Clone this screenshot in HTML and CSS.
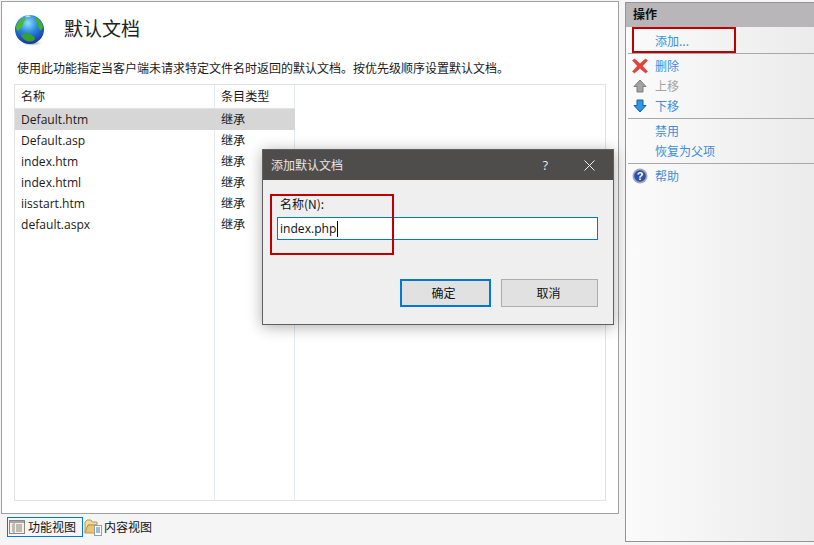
FILE: index.html
```html
<!DOCTYPE html>
<html lang="zh-CN">
<head>
<meta charset="utf-8">
<title>默认文档</title>
<link rel="stylesheet" href="styles.css">
</head>
<body>
<div class="app">
  <div class="left">
    <main class="main">
      <header class="head">
        <svg class="globe" width="34" height="33" viewBox="0 0 34 33">
          <defs>
            <radialGradient id="sea" cx="0.45" cy="0.28" r="0.78">
              <stop offset="0" stop-color="#8fe0fa"/><stop offset="0.42" stop-color="#2a8ade"/><stop offset="1" stop-color="#10289a"/>
            </radialGradient>
            <radialGradient id="sh" cx="0.5" cy="0.5" r="0.5">
              <stop offset="0" stop-color="#666"/><stop offset="1" stop-color="#fff" stop-opacity="0"/>
            </radialGradient>
          </defs>
          <ellipse cx="18" cy="28" rx="12" ry="3.500" fill="url(#sh)"/>
          <circle cx="15.500" cy="14.500" r="14.500" fill="url(#sea)"/>
          <path d="M7 20c4-2 9-2 12 1 3 2 2 4 0 5-4 1-8 0-10-3-1-1-2-2-2-3z" fill="#3a9f2a"/>
          <path d="M2 12C3 8 6 4 10 3c2 0 2 2 0 3-1 2 0 3-2 5-1 2-3 4-4 5-1-1-2-2-2-4z" fill="#4cb82f"/>
          <path d="M21 2c4 2 7 5 8 10-1 2-2 4-3 3-1-2-2-3-2-5 0-3-4-5-3-8z" fill="#45ad2d"/>
          <path d="M11 1c2-1 4-1 6 0-1 1-4 2-6 0z" fill="#c9e7b0"/>
        </svg>
        <h1 class="title">默认文档</h1>
      </header>
      <p class="desc">使用此功能指定当客户端未请求特定文件名时返回的默认文档。按优先级顺序设置默认文档。</p>
      <section class="list">
        <div class="cols">
          <div class="col col-name">
            <div class="cell head-cell">名称</div>
            <div class="cell sel">Default.htm</div>
            <div class="cell">Default.asp</div>
            <div class="cell">index.htm</div>
            <div class="cell">index.html</div>
            <div class="cell">iisstart.htm</div>
            <div class="cell">default.aspx</div>
          </div>
          <div class="col col-type">
            <div class="cell head-cell">条目类型</div>
            <div class="cell sel">继承</div>
            <div class="cell">继承</div>
            <div class="cell">继承</div>
            <div class="cell">继承</div>
            <div class="cell">继承</div>
            <div class="cell">继承</div>
          </div>
        </div>
      </section>
    </main>
    <nav class="tabs">
      <div class="tab tab-on">
        <svg width="16" height="16" viewBox="0 0 16 16">
          <rect x="0.500" y="1.500" width="15" height="13" fill="#f4f1e6" stroke="#8a8a82"/>
          <rect x="1" y="2" width="14" height="2" fill="#a9a9a0"/>
          <path d="M5 4v10M3 6h1M3 8h1M3 10h1M3 12h1M7 6h6M7 8h6M7 10h6M7 12h6" stroke="#8a8a82" fill="none"/>
        </svg>
        <span>功能视图</span>
      </div>
      <div class="tab">
        <svg width="18" height="18" viewBox="0 0 18 18">
          <path d="M1 15V4l2-2h4l1 2h5v3H4z" fill="#f3dd9d" stroke="#b89a55"/>
          <path d="M1 15l3-8h9v8z" fill="#e8c56e" stroke="#b89a55"/>
          <rect x="10.500" y="7.500" width="7" height="10" fill="#fff" stroke="#8e9fb5"/>
          <path d="M12 10h4M12 12h4M12 14h4" stroke="#3f73b5"/>
        </svg>
        <span>内容视图</span>
      </div>
    </nav>
  </div>
  <aside class="side">
    <div class="side-title">操作</div>
    <div class="act act-first"><span class="act-ico"></span><a>添加...</a></div>
    <div class="group">
      <div class="act">
        <svg class="act-ico" width="16" height="16" viewBox="0 0 16 16"><path d="M0.500 2.500l2-1.500L8 5.700 13.500 1l2 1.500L10.500 8l5 5.500-2 1.500L8 10.300 2.500 15l-2-1.500L5.500 8z" fill="#e2423a" stroke="#c4342b" stroke-width="0.500"/></svg>
        <a>删除</a>
      </div>
      <div class="act">
        <svg class="act-ico" width="16" height="16" viewBox="0 0 16 16"><path d="M8 2l6 6.500h-3V14H5V8.500H2z" fill="#a3a3a3" stroke="#7d7d7d"/></svg>
        <a class="off">上移</a>
      </div>
      <div class="act">
        <svg class="act-ico" width="16" height="16" viewBox="0 0 16 16"><path d="M5 2h6v5.500h3L8 14 2 7.500h3z" fill="#2f95e6" stroke="#1560ad"/></svg>
        <a>下移</a>
      </div>
    </div>
    <div class="group">
      <div class="act"><span class="act-ico"></span><a>禁用</a></div>
      <div class="act"><span class="act-ico"></span><a>恢复为父项</a></div>
    </div>
    <div class="group">
      <div class="act">
        <svg class="act-ico" width="16" height="16" viewBox="0 0 16 16">
          <circle cx="8" cy="8" r="7.500" fill="#9fa6b4"/><circle cx="8" cy="8" r="5.800" fill="#2a4fb0"/>
          <text x="8" y="12" text-anchor="middle" class="q">?</text>
        </svg>
        <a>帮助</a>
      </div>
    </div>
  </aside>
</div>

<div class="mark mark-add"></div>

<div class="dialog">
  <div class="dlg-bar">
    <span class="dlg-title">添加默认文档</span>
    <span class="dlg-help">?</span>
    <svg class="dlg-close" width="11" height="11" viewBox="0 0 11 11"><path d="M0.500 0.500l10 10M10.500 0.500l-10 10" stroke="#f0f0f0" fill="none"/></svg>
  </div>
  <div class="dlg-body">
    <label class="dlg-label">名称(N):</label>
    <div class="dlg-input">index.php<span class="caret"></span></div>
    <div class="dlg-btns">
      <div class="btn btn-ok">确定</div>
      <div class="btn btn-no">取消</div>
    </div>
  </div>
</div>
<div class="mark mark-name"></div>
</body>
</html>
```

FILE: styles.css
```css
* { box-sizing: border-box; }
html, body { margin: 0; height: 100%; }
body {
  width: 814px;
  height: 545px;
  overflow: hidden;
  position: relative;
  background: #f5f5f5;
  font-family: "Open Sans", "Noto Sans CJK SC", sans-serif;
  font-size: 12px;
  color: #1a1a1a;
}
.app { display: flex; height: 545px; }
.left { flex: none; width: 619px; padding-left: 1px; display: flex; flex-direction: column; }
.main {
  height: 513px;
  margin-top: 1px;
  background: #fff;
  border: 1px solid #a0a0a0;
  padding: 0 12px;
  display: flex;
  flex-direction: column;
}
.head { display: flex; align-items: flex-start; height: 47px; padding-top: 13px; }
.globe { flex: none; margin-right: 16px; }
.title {
  margin: 1px 0 0;
  font: 400 19px/24px "Noto Sans CJK SC", sans-serif;
  color: #222;
}
.desc {
  margin: 9px 0 0 3px;
  height: 26px;
  font: 400 12px/20px "Noto Sans CJK SC", sans-serif;
  white-space: nowrap;
}
.list {
  height: 417px;
  border: 1px solid #e3e3e3;
  background: #fff;
}
.cols { display: flex; height: 100%; }
.col { border-right: 1px solid #e3e9f2; }
.col-name { width: 200px; }
.col-type { width: 80px; }
.cell {
  height: 21px;
  padding-left: 6px;
  font-size: 12.100px;
  line-height: 21px;
  white-space: nowrap;
}
.head-cell {
  height: 24px;
  line-height: 24px;
  border-bottom: 1px solid #e3e3e3;
  margin-right: -1px;
}
.sel { background: #d6d6d6; margin-right: -1px; }
.tabs { display: flex; align-items: flex-start; gap: 1px; padding: 3px 0 0 6px; }
.tab {
  flex: none;
  display: flex;
  align-items: center;
  gap: 2px;
  height: 20px;
  white-space: nowrap;
  font: 400 12px/18px "Noto Sans CJK SC", sans-serif;
  color: #111;
}
.tab-on { border: 1px solid #0078d7; padding: 0 6px 0 1px; width: 76px; gap: 3px; }
.side {
  flex: none;
  width: 189px;
  margin: 2px 0 3px 6px;
  border-left: 1px solid #949494;
  border-top: 1px solid #949494;
  border-bottom: 1px solid #949494;
  background: linear-gradient(90deg, #fbfbfb, #ebebeb);
}
.side-title {
  height: 24px;
  padding-left: 7px;
  background: #b8b6b8;
  font: 700 12px/22px "Noto Sans CJK SC", sans-serif;
  color: #111;
}
.act { display: flex; align-items: center; height: 20px; padding-left: 4px; }
.act-first { height: 26px; padding-left: 6px; }
.act-ico { flex: none; width: 16px; height: 16px; margin-right: 7px; }
.act a { font: 400 12px/20px "Noto Sans CJK SC", sans-serif; color: #3d8fd8; }
.act-first a { position: relative; top: 1px; }
.act a.off { color: #a3a3a3; }
.q { font: 700 11px "Liberation Sans", sans-serif; fill: #fff; }
.group { border-top: 1px solid #a8a8a8; padding: 2px 0; margin-left: 2px; }

.mark { position: absolute; border: 2px solid #c00000; pointer-events: none; }
.mark-add { left: 632px; top: 27px; width: 104px; height: 26px; }
.mark-name { left: 270px; top: 194px; width: 124px; height: 61px; }

.dialog {
  position: absolute;
  left: 262px;
  top: 149px;
  width: 352px;
  height: 176px;
  border: 1px solid #606060;
  background: #efefef;
  box-shadow: 0 2px 14px rgba(0,0,0,.32);
}
.dlg-bar {
  height: 30px;
  background: #4f4d4b;
  display: flex;
  align-items: center;
  padding: 0 18px 0 8px;
  color: #e6e6e6;
}
.dlg-title { flex: 1; font: 400 12px/28px "Noto Sans CJK SC", sans-serif; }
.dlg-help { font: 400 13px/28px "Open Sans", sans-serif; margin-right: 36px; }
.dlg-close { flex: none; }
.dlg-body { padding: 14px 15px 0 14px; display: flex; flex-direction: column; }
.dlg-label { padding-left: 3px; height: 23px; font: 400 12px/19px "Noto Sans CJK SC", sans-serif; color: #111; }
.dlg-input {
  height: 23px;
  border: 1px solid #0078d7;
  background: #fff;
  padding-left: 2px;
  font: 400 12.100px/21px "Open Sans", sans-serif;
  color: #111;
  display: flex;
  align-items: center;
}
.caret { width: 1px; height: 16px; background: #000; margin-left: 1px; }
.dlg-btns { display: flex; justify-content: flex-end; gap: 10px; margin-top: 39px; }
.btn {
  height: 28px;
  background: #e1e1e1;
  text-align: center;
  font: 400 12px/24px "Noto Sans CJK SC", sans-serif;
  color: #111;
}
.btn-ok { width: 91px; border: 2px solid #0078d7; padding-right: 4px; }
.btn-no { width: 97px; border: 1px solid #adadad; line-height: 26px; padding-right: 2px; }
```
